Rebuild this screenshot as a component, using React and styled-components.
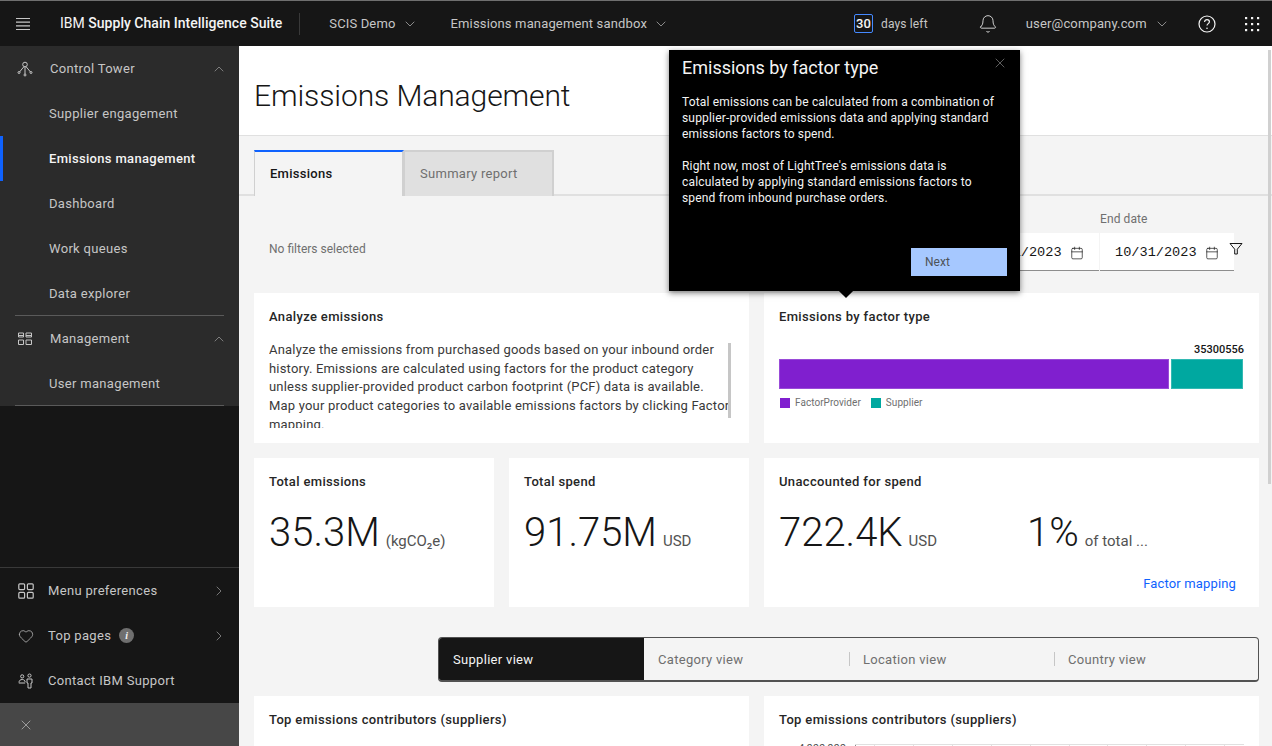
import React from 'react';
import styled, { createGlobalStyle } from 'styled-components';
import { Bell, Calendar, ChevronDown, ChevronRight, ChevronUp, Heart, X } from 'lucide-react';

const GlobalStyle = createGlobalStyle`
  html, body { margin: 0; padding: 0; height: 100%; overflow: hidden; }
  body { font-family: Roboto, "Noto Sans", "Liberation Sans", sans-serif; color: #161616; background: #f4f4f4; }
  * { box-sizing: border-box; }
`;

const navTop = ['Supplier engagement', 'Emissions management', 'Dashboard', 'Work queues', 'Data explorer'];

const MenuIcon = () => (
  <svg width="16" height="16" viewBox="0 0 16 16" stroke="#c6c6c6" strokeWidth="1.2" style={{ flex: 'none' }}>
    <path d="M1 2.5h14M1 6.2h14M1 9.8h14M1 13.5h14" />
  </svg>
);

const HelpIcon = () => (
  <svg width="20" height="20" viewBox="0 0 20 20" fill="none" stroke="#f4f4f4" strokeWidth="1.2">
    <circle cx="10" cy="10" r="8" />
    <path d="M7.6 7.9c0-1.4 1.1-2.3 2.4-2.3s2.4.9 2.4 2.1c0 1.9-2.4 1.9-2.4 3.9" />
    <circle cx="10" cy="14.2" r=".8" fill="#f4f4f4" stroke="none" />
  </svg>
);

const DotsIcon = () => (
  <svg width="16" height="16" viewBox="0 0 16 16" fill="#f4f4f4">
    {[1, 7, 13].map((y) => [1, 7, 13].map((x) => <rect key={`${x}-${y}`} x={x} y={y} width="2.2" height="2.2" />))}
  </svg>
);

const TowerIcon = () => (
  <svg width="16" height="16" viewBox="0 0 16 16" fill="none" stroke="#c6c6c6" strokeWidth="1">
    <circle cx="8" cy="3.5" r="2.3" />
    <path d="M7 5.6 2.5 11M9 5.6l4.5 5.4M8 6v7" />
    <circle cx="2" cy="11.5" r="1" />
    <circle cx="14" cy="11.5" r="1" />
    <circle cx="8" cy="14" r="1" />
  </svg>
);

const BoardIcon = () => (
  <svg width="16" height="16" viewBox="0 0 16 16" fill="none" stroke="#c6c6c6" strokeWidth="1">
    <path d="M1.5 2h5v4h-5zM9 2h5.5v4H9zM1.5 9h5v4.5h-5zM9 9h5.5v4.5H9z" />
    <path d="M1.5 4.5h5M9 4.5h5.5" />
  </svg>
);

const TilesIcon = () => (
  <svg width="16" height="16" viewBox="0 0 16 16" fill="none" stroke="#c6c6c6" strokeWidth="1.2">
    <rect x=".8" y=".8" width="5.8" height="5.8" rx="1" />
    <rect x="9.4" y=".8" width="5.8" height="5.8" rx="1" />
    <rect x=".8" y="9.4" width="5.8" height="5.8" rx="1" />
    <rect x="9.4" y="9.4" width="5.8" height="5.8" rx="1" />
  </svg>
);

const ContactIcon = () => (
  <svg width="16" height="16" viewBox="0 0 16 16" fill="none" stroke="#c6c6c6" strokeWidth="1">
    <circle cx="4.2" cy="3.4" r="1.6" />
    <path d="M1 9.5c0-2 1.4-3 3.2-3s2.8 1 3 2.6M.8 10h6.4" />
    <circle cx="11.5" cy="2.6" r="1.6" />
    <path d="M9 6h5v4h-1v5h-3v-5H9z" />
  </svg>
);

const FilterIcon = () => (
  <svg width="14" height="14" viewBox="0 0 14 14" fill="none" stroke="#161616" strokeWidth="1">
    <path d="M1 1.5h12L8.3 7.2V12H5.7V7.2z" />
  </svg>
);

const Shell = styled.div`
  display: grid;
  grid-template-rows: 46px 1fr;
  grid-template-columns: minmax(0, 1fr);
  height: 100vh;
`;

const TopBar = styled.header`
  display: flex;
  align-items: center;
  background: #161616;
  border-top: 1px solid #6f6f6f;
  color: #c6c6c6;
  font-size: 13px;
  padding-left: 15px;
`;

const Brand = styled.div`
  color: #f4f4f4;
  font-size: 14px;
  margin-left: 29px;
  padding-right: 17px;
  border-right: 1px solid #393939;
  height: 22px;
  line-height: 21px;
  white-space: nowrap;
  letter-spacing: 0.02px;
  b { font-weight: 500; }
`;

const BarMenu = styled.div`
  display: flex;
  align-items: center;
  gap: ${(p) => p.$gap ?? 6}px;
  margin-left: ${(p) => p.$left}px;
  white-space: nowrap;
  letter-spacing: 0.15px;
`;

const DayCount = styled.span`
  border: 1px solid #4589ff;
  border-radius: 2px;
  width: 19px;
  height: 19px;
  line-height: 17px;
  text-align: center;
  font-weight: 500;
  font-size: 13px;
  color: #f4f4f4;
`;

const DaysText = styled.span`
  font-size: 12px;
  margin-left: 8px;
`;

const BarIcon = styled.span`
  display: inline-flex;
  margin-left: ${(p) => p.$left}px;
`;

const Body = styled.div`
  display: grid;
  grid-template-columns: 239px minmax(0, 1fr);
  min-height: 0;
`;

const Side = styled.nav`
  display: flex;
  flex-direction: column;
  background: #161616;
  color: #c6c6c6;
  font-size: 13px;
`;

const NavGroup = styled.div`
  background: #2b2b2b;
  position: relative;
  &::after {
    content: '';
    position: absolute;
    left: 15px;
    right: 15px;
    bottom: 0;
    height: 1px;
    background: #5a5a5a;
  }
`;

const NavRow = styled.div`
  height: 45px;
  display: flex;
  align-items: center;
  padding: 0 12px 0 ${(p) => p.$pad || 49}px;
  position: relative;
  white-space: nowrap;
  font-weight: ${(p) => (p.$active ? 500 : 400)};
  color: ${(p) => (p.$active ? '#f4f4f4' : '#c6c6c6')};
  letter-spacing: 0.32px;
  ${(p) => p.$active && `
    &::before {
      content: '';
      position: absolute;
      left: 0;
      top: 0;
      bottom: 0;
      width: 3px;
      background: #0f62fe;
    }
  `}
`;

const NavIcon = styled.span`
  display: inline-flex;
  width: ${(p) => p.$width || 33}px;
  flex: none;
`;

const NavEnd = styled.span`
  margin-left: auto;
  display: inline-flex;
  color: #a8a8a8;
`;

const SideFoot = styled.div`
  margin-top: auto;
  border-top: 1px solid #393939;
`;

const InfoDot = styled.span`
  width: 15px;
  height: 15px;
  border-radius: 50%;
  background: #6f6f6f;
  color: #f4f4f4;
  font: italic 700 10px/15px "Liberation Serif", serif;
  text-align: center;
  margin-left: 8px;
`;

const CloseBar = styled.div`
  height: 43px;
  background: #474747;
  display: flex;
  align-items: center;
  padding-left: 18px;
  color: #c6c6c6;
`;

const Main = styled.main`
  position: relative;
  overflow: hidden;
  background: #f4f4f4;
`;

const ScrollThumb = styled.div`
  position: absolute;
  right: 1px;
  top: 4px;
  width: 3px;
  height: 434px;
  background: #d0d0d0;
`;

const TitleBand = styled.div`
  height: 90px;
  background: #fff;
  border-bottom: 1px solid #e0e0e0;
  padding: 9px 15px 0;
  display: flex;
  align-items: center;
`;

const PageTitle = styled.h1`
  margin: 0;
  font-size: 30px;
  font-weight: 300;
  letter-spacing: -0.1px;
`;

const TabBar = styled.div`
  display: flex;
  height: 60px;
  padding: 14px 0 0 15px;
  border-bottom: 2px solid #e0e0e0;
`;

const Tab = styled.div`
  width: 150px;
  height: 46px;
  padding: 0 0 2px 15px;
  display: flex;
  align-items: center;
  font-size: 13px;
  letter-spacing: 0.28px;
  font-weight: ${(p) => (p.$active ? 500 : 400)};
  color: ${(p) => (p.$active ? '#161616' : '#6f6f6f')};
  background: ${(p) => (p.$active ? '#f4f4f4' : '#e0e0e0')};
  border-top: 2px solid ${(p) => (p.$active ? '#0f62fe' : '#d0d0d0')};
  border-left: 1px solid #d0d0d0;
  border-right: 2px solid #d0d0d0;
`;

const FilterRow = styled.div`
  display: flex;
  align-items: flex-end;
  height: 97px;
  padding: 0 29px 22px 30px;
`;

const NoFilters = styled.span`
  font-size: 12px;
  color: #6f6f6f;
  margin-bottom: 15px;
  margin-right: auto;
`;

const DateField = styled.div`
  width: 134px;
  margin-left: 1px;
  font-size: 12px;
  color: #6f6f6f;
  letter-spacing: 0.1px;
`;

const DateInput = styled.div`
  height: 38px;
  margin-top: 7px;
  padding: 2px 15px 0;
  background: #fff;
  border-bottom: 1px solid #8d8d8d;
  display: flex;
  align-items: center;
  justify-content: space-between;
  font: 13.6px "Liberation Mono", monospace;
  letter-spacing: 0;
  color: #161616;
`;

const FilterBtn = styled.span`
  display: inline-flex;
  align-self: flex-end;
  margin: 0 0 15px -5px;
`;

const Cards = styled.div`
  display: grid;
  grid-template-columns: repeat(4, 240px);
  grid-auto-rows: ${(p) => p.$row || 150}px;
  gap: 15px;
  padding-left: 15px;
  margin-top: ${(p) => p.$top || 0}px;
`;

const Card = styled.section`
  grid-column: span ${(p) => p.$span || 1};
  background: #fff;
  padding: 15px;
  position: relative;
  overflow: hidden;
`;

const CardTitle = styled.h3`
  margin: 0;
  font-size: 13px;
  line-height: 18px;
  font-weight: 500;
  letter-spacing: 0.35px;
  color: #262626;
`;

const AnalyzeText = styled.div`
  margin-top: 15px;
  height: 87px;
  overflow: hidden;
  font-size: 13px;
  line-height: 18.7px;
  color: #393939;
  width: 461px;
  letter-spacing: 0.19px;
`;

const TextThumb = styled.div`
  position: absolute;
  left: 474px;
  top: 50px;
  width: 3px;
  height: 75px;
  background: #c6c6c6;
`;

const BarTotal = styled.div`
  margin-top: 17px;
  text-align: right;
  font-size: 11px;
  line-height: 14px;
  font-weight: 500;
`;

const StackBar = styled.div`
  display: flex;
  gap: 2px;
  height: 30px;
  margin-top: 2px;
  width: 464px;
`;

const BarPart = styled.div`
  background: ${(p) => p.$color};
  box-shadow: inset 0 0 0 1px rgba(255, 255, 255, 0.2);
`;

const Legend = styled.div`
  display: flex;
  align-items: center;
  margin-top: 7px;
  font-size: 10px;
  line-height: 14px;
  color: #6f6f6f;
  letter-spacing: 0.05px;
`;

const LegendSwatch = styled.i`
  width: 10px;
  height: 10px;
  margin: 0 5px 0 ${(p) => p.$left || 1}px;
  background: ${(p) => p.$color};
`;

const MetricRow = styled.div`
  display: flex;
  margin-top: 17px;
`;

const Metric = styled.div`
  display: flex;
  align-items: baseline;
  width: ${(p) => p.$width || 'auto'};
  white-space: nowrap;
`;

const MetricValue = styled.span`
  font-size: 40px;
  line-height: 50px;
  font-weight: 300;
  color: #161616;
`;

const MetricUnit = styled.span`
  font-size: 15px;
  color: #525252;
  margin-left: 6px;
`;

const LinkRow = styled.div`
  text-align: right;
  padding-right: 8px;
  margin-top: 18px;
  font-size: 13px;
  color: #0f62fe;
  letter-spacing: 0.15px;
`;

const Segments = styled.div`
  display: grid;
  grid-template-columns: repeat(4, 205px);
  width: 821px;
  height: 45px;
  margin: 30px 0 14px 199px;
  border: 1px solid #525252;
  border-bottom-width: 2px;
  border-radius: 4px;
  overflow: hidden;
  font-size: 13px;
  letter-spacing: 0.3px;
`;

const Segment = styled.div`
  display: flex;
  align-items: center;
  padding-left: 14px;
  color: ${(p) => (p.$active ? '#f4f4f4' : '#6f6f6f')};
  background: ${(p) => (p.$active ? '#161616' : 'transparent')};
  position: relative;
  ${(p) => p.$divided && `
    &::before {
      content: '';
      position: absolute;
      left: 0;
      top: 14px;
      bottom: 14px;
      width: 1px;
      background: #c6c6c6;
    }
  `}
`;

const TableHead = styled.div`
  margin-top: 17px;
  width: 11px;
  height: 11px;
  background: #e8daff;
  border: 1px solid #d4bbff;
`;

const AxisRow = styled.div`
  display: flex;
  margin-top: 15px;
  height: 40px;
`;

const AxisLabel = styled.span`
  width: 76px;
  text-align: right;
  padding-right: 9px;
  font-size: 11px;
  line-height: 10px;
  color: #525252;
`;

const Popover = styled.aside`
  position: absolute;
  left: 430px;
  top: 4px;
  width: 351px;
  height: 241px;
  background: #000;
  color: #f4f4f4;
  padding: 7px 13px;
  box-shadow: 0 2px 6px rgba(0, 0, 0, 0.5);
  font-size: 12px;
  line-height: 16px;
  &::after {
    content: '';
    position: absolute;
    left: 172px;
    bottom: -5px;
    width: 10px;
    height: 10px;
    background: #000;
    transform: rotate(45deg);
  }
`;

const PopTitle = styled.h4`
  margin: 0 0 15px;
  font-size: 18px;
  line-height: 22px;
  font-weight: 400;
`;

const PopClose = styled.span`
  position: absolute;
  right: 12px;
  top: 5px;
  color: #8d8d8d;
  display: inline-flex;
`;

const PopText = styled.p`
  margin: 0 0 16px;
  width: 316px;
  font-weight: 400;
  letter-spacing: 0.17px;
`;

const NextBtn = styled.button`
  position: absolute;
  right: 13px;
  bottom: 15px;
  width: 96px;
  height: 28px;
  border: 0;
  background: #a6c8ff;
  color: #4d5358;
  font: inherit;
  text-align: left;
  padding-left: 14px;
`;

export default function App() {
  return (
    <Shell>
      <GlobalStyle />
      <TopBar>
        <MenuIcon />
        <Brand>IBM <b>Supply Chain Intelligence Suite</b></Brand>
        <BarMenu $left={29}>SCIS Demo <ChevronDown size={16} strokeWidth={1} /></BarMenu>
        <BarMenu $left={33}>Emissions management sandbox <ChevronDown size={16} strokeWidth={1} /></BarMenu>
        <BarMenu $left={185} $gap={0}><DayCount>30</DayCount><DaysText>days left</DaysText></BarMenu>
        <BarIcon $left={50}><Bell size={20} strokeWidth={1} color="#f4f4f4" /></BarIcon>
        <BarMenu $left={28} $gap={7}>user@company.com <ChevronDown size={16} strokeWidth={1} /></BarMenu>
        <BarIcon $left={27}><HelpIcon /></BarIcon>
        <BarIcon $left={27}><DotsIcon /></BarIcon>
      </TopBar>
      <Body>
        <Side>
          <NavGroup>
            <NavRow $pad={17}>
              <NavIcon><TowerIcon /></NavIcon>Control Tower
              <NavEnd><ChevronUp size={16} strokeWidth={1} /></NavEnd>
            </NavRow>
            {navTop.map((label) => (
              <NavRow key={label} $active={label === 'Emissions management'}>{label}</NavRow>
            ))}
          </NavGroup>
          <NavGroup>
            <NavRow $pad={17}>
              <NavIcon><BoardIcon /></NavIcon>Management
              <NavEnd><ChevronUp size={16} strokeWidth={1} /></NavEnd>
            </NavRow>
            <NavRow>User management</NavRow>
          </NavGroup>
          <SideFoot>
            <NavRow $pad={18}>
              <NavIcon $width={30}><TilesIcon /></NavIcon>Menu preferences
              <NavEnd><ChevronRight size={16} strokeWidth={1} /></NavEnd>
            </NavRow>
            <NavRow $pad={18}>
              <NavIcon $width={30}><Heart size={16} strokeWidth={1.1} /></NavIcon>Top pages<InfoDot>i</InfoDot>
              <NavEnd><ChevronRight size={16} strokeWidth={1} /></NavEnd>
            </NavRow>
            <NavRow $pad={18}>
              <NavIcon $width={30}><ContactIcon /></NavIcon>Contact IBM Support
            </NavRow>
          </SideFoot>
          <CloseBar><X size={16} strokeWidth={1} /></CloseBar>
        </Side>
        <Main>
          <TitleBand><PageTitle>Emissions Management</PageTitle></TitleBand>
          <TabBar>
            <Tab $active>Emissions</Tab>
            <Tab>Summary report</Tab>
          </TabBar>
          <FilterRow>
            <NoFilters>No filters selected</NoFilters>
            <DateField>
              Start date
              <DateInput>10/01/2023<Calendar size={14} strokeWidth={1.2} /></DateInput>
            </DateField>
            <DateField>
              End date
              <DateInput>10/31/2023<Calendar size={14} strokeWidth={1.2} /></DateInput>
            </DateField>
            <FilterBtn><FilterIcon /></FilterBtn>
          </FilterRow>
          <Cards>
            <Card $span={2}>
              <CardTitle>Analyze emissions</CardTitle>
              <AnalyzeText>
                Analyze the emissions from purchased goods based on your inbound order history. Emissions are calculated using factors for the product category unless supplier-provided product carbon footprint (PCF) data is available. Map your product categories to available emissions factors by clicking Factor mapping.
              </AnalyzeText>
              <TextThumb />
            </Card>
            <Card $span={2}>
              <CardTitle>Emissions by factor type</CardTitle>
              <BarTotal>35300556</BarTotal>
              <StackBar>
                <BarPart $color="#801fcf" style={{ flexGrow: 390 }} />
                <BarPart $color="#00a8a0" style={{ flexGrow: 72 }} />
              </StackBar>
              <Legend>
                <LegendSwatch $color="#801fcf" />FactorProvider
                <LegendSwatch $color="#00a8a0" $left={10} />Supplier
              </Legend>
            </Card>
          </Cards>
          <Cards $top={15} $row={149}>
            <Card>
              <CardTitle>Total emissions</CardTitle>
              <MetricRow>
                <Metric><MetricValue>35.3M</MetricValue><MetricUnit>(kgCO₂e)</MetricUnit></Metric>
              </MetricRow>
            </Card>
            <Card>
              <CardTitle>Total spend</CardTitle>
              <MetricRow>
                <Metric><MetricValue>91.75M</MetricValue><MetricUnit>USD</MetricUnit></Metric>
              </MetricRow>
            </Card>
            <Card $span={2}>
              <CardTitle>Unaccounted for spend</CardTitle>
              <MetricRow>
                <Metric $width="248px"><MetricValue>722.4K</MetricValue><MetricUnit>USD</MetricUnit></Metric>
                <Metric><MetricValue>1%</MetricValue><MetricUnit>of total ...</MetricUnit></Metric>
              </MetricRow>
              <LinkRow>Factor mapping</LinkRow>
            </Card>
          </Cards>
          <Segments>
            <Segment $active>Supplier view</Segment>
            <Segment>Category view</Segment>
            <Segment $divided>Location view</Segment>
            <Segment $divided>Country view</Segment>
          </Segments>
          <Cards>
            <Card $span={2}>
              <CardTitle>Top emissions contributors (suppliers)</CardTitle>
              <TableHead />
            </Card>
            <Card $span={2}>
              <CardTitle>Top emissions contributors (suppliers)</CardTitle>
              <AxisRow>
                <AxisLabel>4,000,000</AxisLabel>
                <svg width="390" height="40" stroke="#e0e0e0">
                  <path d="M.5 0v40" stroke="#8d8d8d" />
                  <path d="M0 .5h390" />
                  {[19, 58, 97, 136, 175, 214, 252, 291, 330, 369].map((x) => (
                    <path key={x} d={`M${x + 0.5} 0v40`} />
                  ))}
                </svg>
              </AxisRow>
            </Card>
          </Cards>
          <ScrollThumb />
          <Popover>
            <PopTitle>Emissions by factor type</PopTitle>
            <PopClose><X size={16} strokeWidth={1} /></PopClose>
            <PopText>Total emissions can be calculated from a combination of supplier-provided emissions data and applying standard emissions factors to spend.</PopText>
            <PopText>Right now, most of LightTree's emissions data is calculated by applying standard emissions factors to spend from inbound purchase orders.</PopText>
            <NextBtn>Next</NextBtn>
          </Popover>
        </Main>
      </Body>
    </Shell>
  );
}
